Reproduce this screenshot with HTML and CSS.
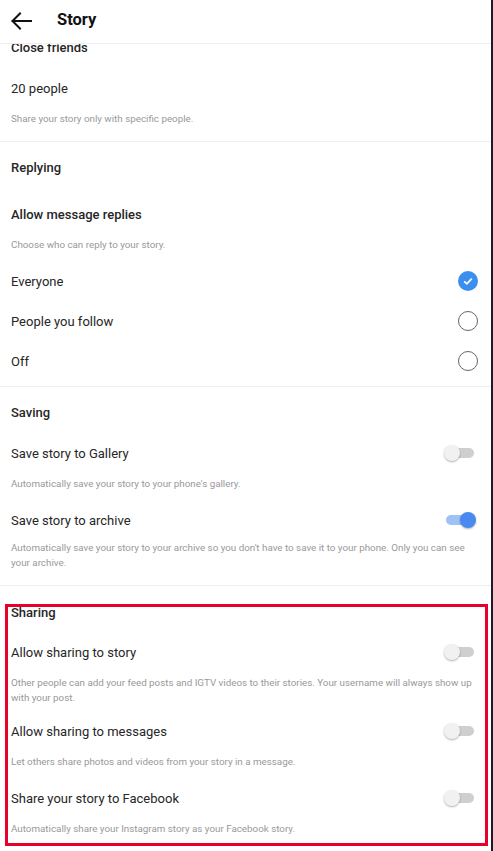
FILE: index.html
```html
<!DOCTYPE html>
<html>
<head>
    <title>Story</title>
    <link rel="stylesheet" href="styles.css">
</head>
<body>
    <div class="app">
        <header class="topbar">
            <svg class="back" width="22" height="22" viewBox="0 0 22 22">
                <path d="M21 11H2.5M10 3.5L2.5 11L10 18.5" fill="none" stroke="#111" stroke-width="2" stroke-linecap="square"/>
            </svg>
            <span class="title">Story</span>
        </header>

        <div class="content">
            <div class="section close-friends">
                <div class="section-head">Close friends</div>
                <div class="row">20 people</div>
                <div class="desc">Share your story only with specific people.</div>
            </div>

            <div class="section replying">
                <div class="section-head">Replying</div>
                <div class="row sub">Allow message replies</div>
                <div class="desc">Choose who can reply to your story.</div>
                <div class="row">
                    <span class="label">Everyone</span>
                    <span class="radio checked">
                        <svg width="12" height="12" viewBox="0 0 12 12"><path d="M2.2 6.3L4.8 8.8L9.8 3.6" fill="none" stroke="#fff" stroke-width="1.8"/></svg>
                    </span>
                </div>
                <div class="row">
                    <span class="label">People you follow</span>
                    <span class="radio"></span>
                </div>
                <div class="row">
                    <span class="label">Off</span>
                    <span class="radio"></span>
                </div>
            </div>

            <div class="section saving">
                <div class="section-head">Saving</div>
                <div class="row">
                    <span class="label">Save story to Gallery</span>
                    <span class="toggle"><span class="track"></span><span class="knob"></span></span>
                </div>
                <div class="desc">Automatically save your story to your phone's gallery.</div>
                <div class="row">
                    <span class="label">Save story to archive</span>
                    <span class="toggle on"><span class="track"></span><span class="knob"></span></span>
                </div>
                <div class="desc last">Automatically save your story to your archive so you don't have to save it to your phone. Only you can see your archive.</div>
            </div>

            <div class="section sharing">
                <div class="section-head">Sharing</div>
                <div class="row">
                    <span class="label">Allow sharing to story</span>
                    <span class="toggle"><span class="track"></span><span class="knob"></span></span>
                </div>
                <div class="desc tight">Other people can add your feed posts and IGTV videos to their stories. Your username will always show up with your post.</div>
                <div class="row">
                    <span class="label">Allow sharing to messages</span>
                    <span class="toggle"><span class="track"></span><span class="knob"></span></span>
                </div>
                <div class="desc">Let others share photos and videos from your story in a message.</div>
                <div class="row">
                    <span class="label">Share your story to Facebook</span>
                    <span class="toggle"><span class="track"></span><span class="knob"></span></span>
                </div>
                <div class="desc">Automatically share your Instagram story as your Facebook story.</div>
            </div>
        </div>

        <div class="highlight"></div>
    </div>
</body>
</html>
```

FILE: styles.css
```css
body { margin: 0; background: #1c1b2b; font-family: Roboto, "Noto Sans", sans-serif; color: #262626; }
.app { position: relative; width: 491px; height: 851px; background: #fff; overflow: hidden; }

/* header sits over the scrolled list */
.topbar { position: absolute; top: 0; left: 0; right: 0; height: 43px; background: #fff; border-bottom: 1px solid #efefef; display: flex; align-items: center; z-index: 2; }
.back { margin-left: 10px; margin-top: -2px; }
.title { margin-left: 25px; margin-top: -4px; font-size: 16.5px; font-weight: 700; color: #111; }

.content { padding-top: 22px; }
.section { border-bottom: 1px solid #efefef; }
.sharing { border-bottom: none; }
.close-friends { padding-bottom: 6px; }
.replying { padding-bottom: 5px; }
.saving { padding-bottom: 15px; }

.section-head { padding: 6px 11px 0; line-height: 40px; font-size: 13px; font-weight: 500; }
.sharing .section-head { padding-top: 8px; line-height: 38px; }
.row { height: 40px; padding: 0 11px; display: flex; align-items: center; font-size: 13px; }
.row.sub { margin-top: 6px; font-weight: 500; }
.label { flex: 1; }

.desc { padding: 3px 11px 9px; font-size: 9.8px; line-height: 15px; color: #999; }
.desc.tight { padding-bottom: 6px; }
.desc.last { padding-top: 0; padding-bottom: 0; }

.radio { width: 20px; height: 20px; box-sizing: border-box; border: 1.6px solid #666; border-radius: 50%; margin-right: 2px; display: flex; align-items: center; justify-content: center; }
.radio.checked { border: none; background: #3b8ff0; }

.toggle { position: relative; width: 32px; height: 18px; margin-right: 4px; }
.toggle .track { position: absolute; left: 2px; top: 4px; width: 28px; height: 10px; border-radius: 5px; background: #cfcfcf; }
.toggle .knob { position: absolute; left: 0; top: 1px; width: 16px; height: 16px; border-radius: 50%; background: #f1f1f1; box-shadow: 0 1px 2px rgba(0,0,0,0.3); }
.toggle.on .track { background: #9ec2f6; }
.toggle.on .knob { left: 16px; background: #4a89ef; }

.highlight { position: absolute; left: 5px; top: 604px; width: 483px; height: 242px; box-sizing: border-box; border: 3px solid #e8002b; pointer-events: none; }
```
